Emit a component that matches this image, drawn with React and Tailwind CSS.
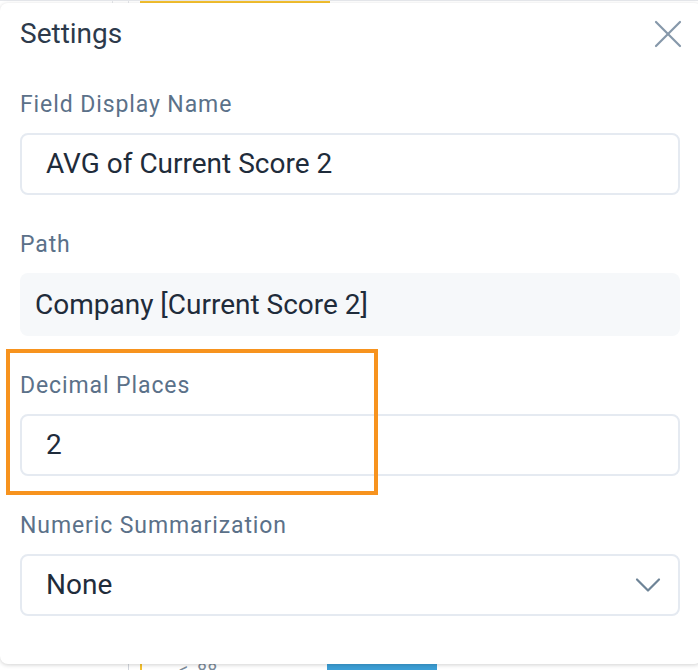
import { X, ChevronDown } from "lucide-react";

function Label({ children }) {
  return <div className="text-[23px] leading-none tracking-[0.9px] text-[#5b7189]">{children}</div>;
}

function Field({ label, children }) {
  return (
    <div className="flex flex-col gap-[17px]">
      <Label>{label}</Label>
      {children}
    </div>
  );
}

export default function App() {
  return (
    <div className="w-[698px] h-[670px] bg-white overflow-hidden flex flex-col font-['Roboto',sans-serif]">
      {/* strip of the page behind, top */}
      <div className="h-[3px] shrink-0 flex items-start border-t border-gray-200">
        <div className="ml-[112px] w-px h-[3px] bg-gray-200" />
        <div className="ml-[15px] w-px h-[3px] bg-gray-200" />
        <div className="ml-[11px] w-[190px] h-[3px] bg-[#f5c12e]" />
      </div>

      {/* settings popover */}
      <div className="relative z-10 w-[702px] h-[661px] shrink-0 bg-white rounded-[8px] shadow-[0_1px_4px_rgba(0,0,0,0.18)] px-[20px] pt-[17px] flex flex-col">
        <div className="flex items-center w-[660px]">
          <h2 className="text-[28px] leading-none text-[#2d3a4b]">Settings</h2>
          <X size={48} strokeWidth={1.1} className="ml-auto -mr-[12px] -my-[10px] text-[#8698aa]" />
        </div>

        <div className="mt-[45px] flex flex-col gap-[38px]">
          <Field label="Field Display Name">
            <div className="w-[660px] h-[62px] border-2 border-[#e5eaf1] rounded-[8px] flex items-center px-[24px] text-[28px] text-[#1f2c3b]">
              AVG of Current Score 2
            </div>
          </Field>

          <Field label="Path">
            <div className="w-[660px] h-[63px] bg-[#f6f8fa] rounded-[8px] flex items-center px-[15px] text-[28px] text-[#1f2c3b]">
              Company [Current Score 2]
            </div>
          </Field>

          <div className="relative">
            {/* highlight frame drawn over the field */}
            <div className="absolute left-[-14px] top-[-25px] w-[372px] h-[146px] border-[4px] border-[#f7931e]" />
            <Field label="Decimal Places">
              <div className="w-[660px] h-[62px] border-2 border-[#e5eaf1] rounded-[8px] flex items-center px-[24px] text-[28px] text-[#1f2c3b]">
                2
              </div>
            </Field>
          </div>

          <Field label="Numeric Summarization">
            <div className="w-[660px] h-[62px] border-2 border-[#e5eaf1] rounded-[8px] flex items-center justify-between pl-[24px] pr-[8px] text-[28px] text-[#1f2c3b]">
              <span>None</span>
              <ChevronDown size={44} strokeWidth={1.2} className="-my-[10px] text-[#6e8497]" />
            </div>
          </Field>
        </div>
      </div>

      {/* strip of the page behind, bottom */}
      <div className="h-[6px] shrink-0 flex items-start overflow-hidden">
        <div className="ml-[128px] w-px h-[6px] bg-gray-300" />
        <div className="ml-[11px] w-[2px] h-[6px] bg-[#f5c12e]" />
        <div className="ml-[37px] w-[60px] -mt-[3px] text-[18px] leading-none text-[#7b8a99] whitespace-nowrap">&lt;&nbsp;&nbsp;88</div>
        <div className="ml-[88px] w-[110px] h-[6px] bg-[#3c9fd6]" />
      </div>
    </div>
  );
}
